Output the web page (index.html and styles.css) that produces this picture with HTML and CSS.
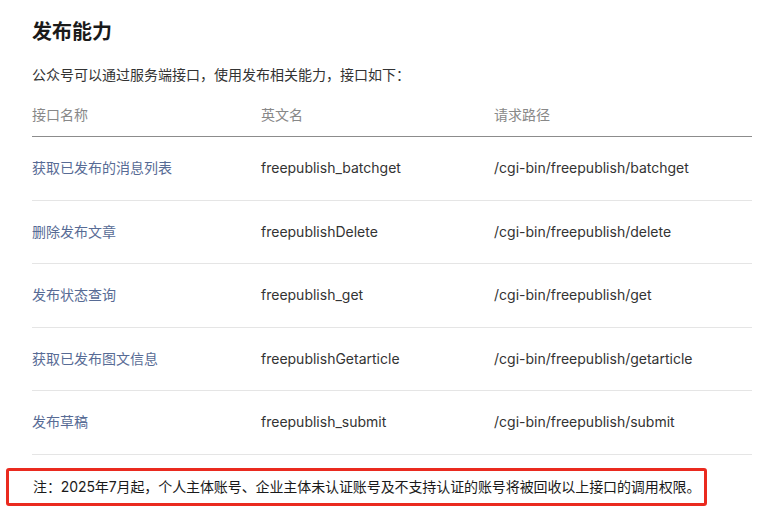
FILE: index.html
```html
<!DOCTYPE html>
<html lang="zh-CN">
<head>
<meta charset="utf-8">
<link rel="stylesheet" href="styles.css">
</head>
<body>
<div class="page">
  <h2 class="title">发布能力</h2>
  <p class="desc">公众号可以通过服务端接口，使用发布相关能力，接口如下：</p>
  <div class="table">
    <div class="row head">
      <div class="c1">接口名称</div><div class="c2">英文名</div><div class="c3">请求路径</div>
    </div>
    <div class="row">
      <div class="c1 link">获取已发布的消息列表</div><div class="c2">freepublish_batchget</div><div class="c3">/cgi-bin/freepublish/batchget</div>
    </div>
    <div class="row">
      <div class="c1 link">删除发布文章</div><div class="c2">freepublishDelete</div><div class="c3">/cgi-bin/freepublish/delete</div>
    </div>
    <div class="row">
      <div class="c1 link">发布状态查询</div><div class="c2">freepublish_get</div><div class="c3">/cgi-bin/freepublish/get</div>
    </div>
    <div class="row">
      <div class="c1 link">获取已发布图文信息</div><div class="c2">freepublishGetarticle</div><div class="c3">/cgi-bin/freepublish/getarticle</div>
    </div>
    <div class="row">
      <div class="c1 link">发布草稿</div><div class="c2">freepublish_submit</div><div class="c3">/cgi-bin/freepublish/submit</div>
    </div>
  </div>
  <div class="note">注：2025年7月起，个人主体账号、企业主体未认证账号及不支持认证的账号将被回收以上接口的调用权限。</div>
</div>
</body>
</html>
```

FILE: styles.css
```css
html, body {
  margin: 0;
  padding: 0;
  background: #ffffff;
}
body {
  font-family: Inter, "Noto Sans CJK SC", sans-serif;
  color: #333333;
  font-size: 14px;
}
.page {
  padding: 19px 20px 0 32px;
}
.title {
  margin: 0;
  font-size: 20px;
  line-height: 26px;
  font-weight: 700;
  color: #1a1a1a;
}
.desc {
  margin: 19px 0 0 0;
  line-height: 22px;
  color: #333333;
}
.table {
  margin-top: 9px;
}
.row {
  display: grid;
  grid-template-columns: 229px 233px 1fr;
  border-bottom: 1px solid #e5e5e5;
  padding: 20.25px 0;
  line-height: 22px;
}
.row.head {
  padding: 9px 0 10px 0;
  border-bottom: 1px solid #8c8c8c;
  color: #888888;
}
.link {
  color: #576b95;
}
.note {
  margin: 13px 0 0 -26px;
  width: 701px;
  box-sizing: border-box;
  border: 3px solid #ea2a1f;
  border-radius: 3px;
  padding: 5px 0 5px 24px;
  line-height: 22px;
  color: #1a1a1a;
  white-space: nowrap;
  letter-spacing: -0.1px;
}
```
